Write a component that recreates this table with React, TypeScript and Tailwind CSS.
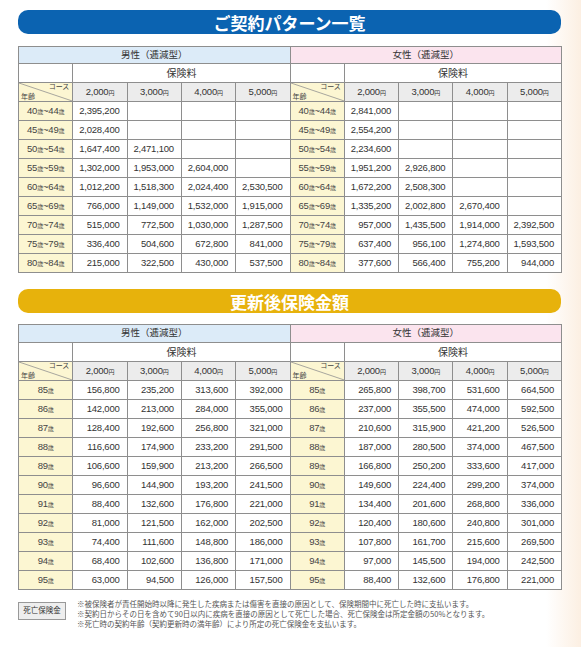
import React from "react"

type Row = { age: React.ReactNode; m: string[]; f: string[] }

const yen = ["2,000", "3,000", "4,000", "5,000"]

const Sai = () => <span className="text-[6px]">歳</span>

const range = (a: number, b: number) => (
    <>
        {a}<Sai />~{b}<Sai />
    </>
)

const contract: Row[] = [
    { age: range(40, 44), m: ["2,395,200"], f: ["2,841,000"] },
    { age: range(45, 49), m: ["2,028,400"], f: ["2,554,200"] },
    { age: range(50, 54), m: ["1,647,400", "2,471,100"], f: ["2,234,600"] },
    { age: range(55, 59), m: ["1,302,000", "1,953,000", "2,604,000"], f: ["1,951,200", "2,926,800"] },
    { age: range(60, 64), m: ["1,012,200", "1,518,300", "2,024,400", "2,530,500"], f: ["1,672,200", "2,508,300"] },
    { age: range(65, 69), m: ["766,000", "1,149,000", "1,532,000", "1,915,000"], f: ["1,335,200", "2,002,800", "2,670,400"] },
    { age: range(70, 74), m: ["515,000", "772,500", "1,030,000", "1,287,500"], f: ["957,000", "1,435,500", "1,914,000", "2,392,500"] },
    { age: range(75, 79), m: ["336,400", "504,600", "672,800", "841,000"], f: ["637,400", "956,100", "1,274,800", "1,593,500"] },
    { age: range(80, 84), m: ["215,000", "322,500", "430,000", "537,500"], f: ["377,600", "566,400", "755,200", "944,000"] },
]

const renewRaw: [number, string[], string[]][] = [
    [85, ["156,800", "235,200", "313,600", "392,000"], ["265,800", "398,700", "531,600", "664,500"]],
    [86, ["142,000", "213,000", "284,000", "355,000"], ["237,000", "355,500", "474,000", "592,500"]],
    [87, ["128,400", "192,600", "256,800", "321,000"], ["210,600", "315,900", "421,200", "526,500"]],
    [88, ["116,600", "174,900", "233,200", "291,500"], ["187,000", "280,500", "374,000", "467,500"]],
    [89, ["106,600", "159,900", "213,200", "266,500"], ["166,800", "250,200", "333,600", "417,000"]],
    [90, ["96,600", "144,900", "193,200", "241,500"], ["149,600", "224,400", "299,200", "374,000"]],
    [91, ["88,400", "132,600", "176,800", "221,000"], ["134,400", "201,600", "268,800", "336,000"]],
    [92, ["81,000", "121,500", "162,000", "202,500"], ["120,400", "180,600", "240,800", "301,000"]],
    [93, ["74,400", "111,600", "148,800", "186,000"], ["107,800", "161,700", "215,600", "269,500"]],
    [94, ["68,400", "102,600", "136,800", "171,000"], ["97,000", "145,500", "194,000", "242,500"]],
    [95, ["63,000", "94,500", "126,000", "157,500"], ["88,400", "132,600", "176,800", "221,000"]],
]

const renew: Row[] = renewRaw.map(([a, m, f]) => ({ age: <>{a}<Sai /></>, m, f }))

const cell = "border border-[#8e8e8e] p-0"

function Corner() {
    return (
        <td className={`${cell} relative bg-[#fcf6d2] overflow-hidden`}>
            <svg className="absolute inset-0 w-full h-full" preserveAspectRatio="none" viewBox="0 0 54 19">
                <line x1="0" y1="0" x2="54" y2="19" stroke="#8e8e8e" strokeWidth="0.8" />
            </svg>
            <span className="absolute right-[3px] top-[0px] text-[7px] leading-none text-[#444]">コース</span>
            <span className="absolute left-[2px] bottom-[1px] text-[7px] leading-none text-[#444]">年齢</span>
        </td>
    )
}

function PriceTable({ rows, headH }: { rows: Row[]; headH: string }) {
    const pad = (v: string[]) => [0, 1, 2, 3].map((i) => v[i] ?? "")
    return (
        <table className="w-[543px] table-fixed border-collapse text-[#333]">
            <colgroup>
                {Array.from({ length: 10 }).map((_, i) => (
                    <col key={i} className="w-[54.3px]" />
                ))}
            </colgroup>
            <tbody>
                <tr className={headH}>
                    <td colSpan={5} className={`${cell} bg-[#dcebf8] text-center text-[9.5px]`}>男性（逓減型）</td>
                    <td colSpan={5} className={`${cell} bg-[#fbe4ee] text-center text-[9.5px]`}>女性（逓減型）</td>
                </tr>
                <tr className="h-[19px]">
                    <td className={`${cell} bg-white`}></td>
                    <td colSpan={4} className={`${cell} bg-white text-center text-[10px]`}>保険料</td>
                    <td className={`${cell} bg-white`}></td>
                    <td colSpan={4} className={`${cell} bg-white text-center text-[10px]`}>保険料</td>
                </tr>
                <tr className="h-[19px]">
                    <Corner />
                    {yen.map((y) => (
                        <td key={"m" + y} className={`${cell} bg-[#ececec] text-center text-[9.5px] tracking-[-0.2px]`}>
                            {y}<span className="text-[6px]">円</span>
                        </td>
                    ))}
                    <Corner />
                    {yen.map((y) => (
                        <td key={"f" + y} className={`${cell} bg-[#ececec] text-center text-[9.5px] tracking-[-0.2px]`}>
                            {y}<span className="text-[6px]">円</span>
                        </td>
                    ))}
                </tr>
                {rows.map((r, i) => (
                    <tr key={i} className="h-[19px]">
                        <td className={`${cell} bg-[#fcf6d2] text-center text-[9.5px] tracking-[-0.2px] text-[#444]`}>{r.age}</td>
                        {pad(r.m).map((v, j) => (
                            <td key={"m" + j} className={`${cell} bg-white text-right pr-[7px] text-[9.5px] tracking-[-0.2px]`}>{v}</td>
                        ))}
                        <td className={`${cell} bg-[#fcf6d2] text-center text-[9.5px] tracking-[-0.2px] text-[#444]`}>{r.age}</td>
                        {pad(r.f).map((v, j) => (
                            <td key={"f" + j} className={`${cell} bg-white text-right pr-[7px] text-[9.5px] tracking-[-0.2px]`}>{v}</td>
                        ))}
                    </tr>
                ))}
            </tbody>
        </table>
    )
}

export default function App() {
    return (
        <div
            className="w-full min-h-[647px] bg-[linear-gradient(to_right,#ffffff_0%,#ffffff_94%,#fcefe2_100%)]"
            style={{ fontFamily: '"Liberation Sans", "Noto Sans CJK JP", sans-serif' }}
        >
            <div className="ml-[18px] w-[543px] pt-[10px]">
                <div className="h-[24px] rounded-[10px] bg-[#0b63b1] flex items-center justify-center">
                    <span className="text-white font-bold text-[17px] leading-none" style={{ fontFamily: '"Noto Sans CJK JP", sans-serif' }}>ご契約パターン一覧</span>
                </div>
                <div className="mt-[12px]">
                    <PriceTable rows={contract} headH="h-[17px]" />
                </div>

                <div className="mt-[16px] h-[24px] rounded-[10px] bg-[#e7b20c] flex items-center justify-center">
                    <span className="text-white font-bold text-[17px] leading-none" style={{ fontFamily: '"Noto Sans CJK JP", sans-serif' }}>更新後保険金額</span>
                </div>
                <div className="mt-[11px]">
                    <PriceTable rows={renew} headH="h-[18px]" />
                </div>

                <div className="mt-[9px] flex gap-[11px] items-start">
                    <div className="mt-[3px] w-[48px] h-[18px] shrink-0 border border-[#999] bg-[#eeeeee] flex items-center justify-center text-[7.5px] text-[#333]">
                        死亡保険金
                    </div>
                    <div className="text-[7.5px] leading-[10px] text-[#555]" style={{ fontFamily: '"Noto Sans CJK JP", sans-serif' }}>
                        <div>※被保険者が責任開始時以降に発生した疾病または傷害を直接の原因として、保険期間中に死亡した時に支払います。</div>
                        <div>※契約日からその日を含めて90日以内に疾病を直接の原因として死亡した場合、死亡保険金は所定金額の50%となります。</div>
                        <div>※死亡時の契約年齢（契約更新時の満年齢）により所定の死亡保険金を支払います。</div>
                    </div>
                </div>
            </div>
        </div>
    )
}
